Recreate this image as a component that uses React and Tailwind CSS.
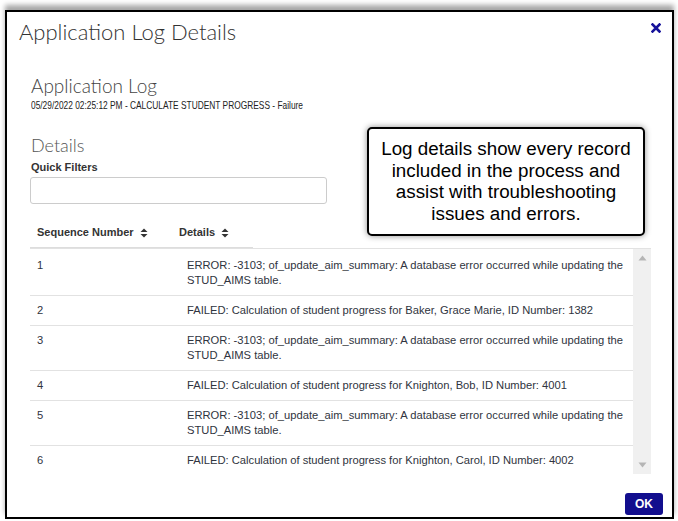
import React from 'react';

const rows = [
  { seq: 1, text: 'ERROR: -3103; of_update_aim_summary: A database error occurred while updating the STUD_AIMS table.' },
  { seq: 2, text: 'FAILED: Calculation of student progress for Baker, Grace Marie, ID Number: 1382' },
  { seq: 3, text: 'ERROR: -3103; of_update_aim_summary: A database error occurred while updating the STUD_AIMS table.' },
  { seq: 4, text: 'FAILED: Calculation of student progress for Knighton, Bob, ID Number: 4001' },
  { seq: 5, text: 'ERROR: -3103; of_update_aim_summary: A database error occurred while updating the STUD_AIMS table.' },
  { seq: 6, text: 'FAILED: Calculation of student progress for Knighton, Carol, ID Number: 4002' },
];

function SortIcon() {
  return (
    <svg width="8" height="10" viewBox="0 0 8 10" className="ml-[6px] inline-block">
      <path d="M4 0.5 L7.5 4 L0.5 4 Z" fill="#333" />
      <path d="M4 9.5 L7.5 6 L0.5 6 Z" fill="#333" />
    </svg>
  );
}

function Scrollbar() {
  return (
    <div className="w-[18px] bg-[#f0f0f0] flex flex-col items-center justify-between py-[6px]">
      <svg width="9" height="6" viewBox="0 0 9 6">
        <path d="M4.5 0.5 L8.5 5.5 L0.5 5.5 Z" fill="#b5b5b5" />
      </svg>
      <svg width="9" height="6" viewBox="0 0 9 6">
        <path d="M4.5 5.5 L8.5 0.5 L0.5 0.5 Z" fill="#b5b5b5" />
      </svg>
    </div>
  );
}

export default function App() {
  return (
    <div className="w-[678px] h-[521px] bg-white pl-[5px] pt-[10px] overflow-hidden" style={{ fontFamily: '"Liberation Sans", Arial, sans-serif' }}>
      <div className="relative w-[669px] h-[509px] border-2 border-black bg-white shadow-[0_-5px_5px_rgba(0,0,0,0.35)] flex flex-col">
        {/* Header */}
        <div className="pl-[12px] pt-[6px] h-[33px]">
          <h1 className="text-[22px] leading-[27px] font-light text-[#333]" style={{ fontFamily: 'Lato, "Open Sans", sans-serif' }}>
            Application Log Details
          </h1>
        </div>
        <button className="absolute right-[11px] top-[11px]">
          <svg width="10" height="10" viewBox="0 0 10 10">
            <path d="M1.5 1.5 L8.5 8.5 M8.5 1.5 L1.5 8.5" stroke="#16129a" strokeWidth="2.6" strokeLinecap="square" />
          </svg>
        </button>

        {/* Body */}
        <div className="pl-[23px] flex flex-col">
          <h2 className="mt-[29px] ml-[1px] text-[19px] leading-[23px] font-light text-[#444]" style={{ fontFamily: 'Lato, "Open Sans", sans-serif' }}>
            Application Log
          </h2>
          <div className="mt-[1px] ml-[1px] text-[11px] leading-[14px] text-[#222] whitespace-nowrap origin-left scale-x-[0.76]">
            05/29/2022 02:25:12 PM - CALCULATE STUDENT PROGRESS - Failure
          </div>
          <h2 className="mt-[22px] ml-[1px] text-[18px] leading-[22px] font-light text-[#555]" style={{ fontFamily: 'Lato, "Open Sans", sans-serif' }}>
            Details
          </h2>
          <div className="mt-[4px] ml-[1px] text-[11px] leading-[14px] font-bold text-[#333]">Quick Filters</div>
          <input className="mt-[3px] w-[297px] h-[27px] border border-[#ccc] rounded-[3px] outline-none" />

          {/* Grid */}
          <div className="mt-[14px] w-[621px]">
            <div className="flex h-[31px] items-center w-[223px] border-b-2 border-[#ddd] text-[11px] font-bold text-[#333]">
              <div className="w-[142px] pl-[7px] flex items-center">Sequence Number <SortIcon /></div>
              <div className="pl-[7px] flex items-center">Details <SortIcon /></div>
            </div>
            <div className="flex h-[226px] border-t border-[#e2e2e2] -mt-px">
              <div className="flex-1 overflow-hidden pt-[2px] text-[11.2px] leading-[15px] text-[#2f3440]">
                {rows.map((r) => (
                  <div key={r.seq} className="flex border-b border-[#e2e2e2] py-[7px]">
                    <div className="w-[150px] pl-[7px]">{r.seq}</div>
                    <div className="flex-1 pl-[7px] pr-[8px]">{r.text}</div>
                  </div>
                ))}
              </div>
              <Scrollbar />
            </div>
          </div>
        </div>

        {/* Footer */}
        <div className="mt-auto flex justify-end pr-[9px] pb-[2px]">
          <button className="w-[38px] h-[22px] rounded-[3px] bg-[#120e8e] text-white text-[12px] font-bold">OK</button>
        </div>

        {/* Callout */}
        <div className="absolute left-[360px] top-[115px] w-[278px] h-[109px] border-2 border-black rounded-[5px] bg-white shadow-[0_0_6px_rgba(0,0,0,0.45)] pt-[9px] text-center text-[18.8px] leading-[21.7px] text-black">
          Log details show every record<br />
          included in the process and<br />
          assist with troubleshooting<br />
          issues and errors.
        </div>
      </div>
    </div>
  );
}
